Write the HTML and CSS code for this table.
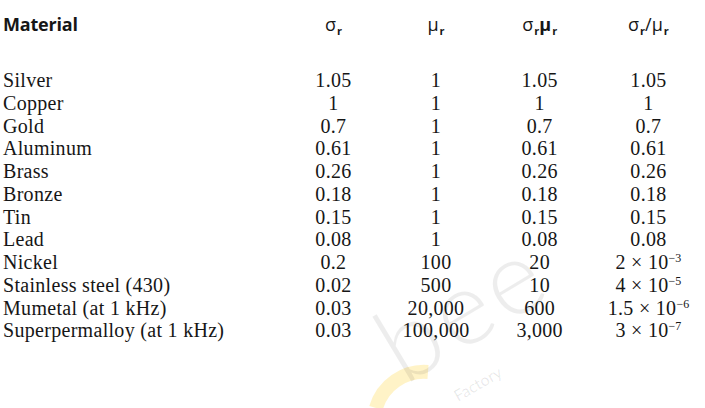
FILE: index.html
```html
<!DOCTYPE html>
<html lang="en">
<head>
    <meta charset="UTF-8">
    <title>Shielding materials</title>
    <link rel="stylesheet" href="styles.css">
</head>
<body>
    <table class="materials">
        <thead>
            <tr>
                <th class="name">Material</th>
                <th>&sigma;<sub>r</sub></th>
                <th>&mu;<sub>r</sub></th>
                <th>&sigma;<sub>r</sub><b>&mu;</b><sub>r</sub></th>
                <th>&sigma;<sub>r</sub>/&mu;<sub>r</sub></th>
            </tr>
        </thead>
        <tbody>
            <tr><td class="name">Silver</td><td>1.05</td><td>1</td><td>1.05</td><td>1.05</td></tr>
            <tr><td class="name">Copper</td><td>1</td><td>1</td><td>1</td><td>1</td></tr>
            <tr><td class="name">Gold</td><td>0.7</td><td>1</td><td>0.7</td><td>0.7</td></tr>
            <tr><td class="name">Aluminum</td><td>0.61</td><td>1</td><td>0.61</td><td>0.61</td></tr>
            <tr><td class="name">Brass</td><td>0.26</td><td>1</td><td>0.26</td><td>0.26</td></tr>
            <tr><td class="name">Bronze</td><td>0.18</td><td>1</td><td>0.18</td><td>0.18</td></tr>
            <tr><td class="name">Tin</td><td>0.15</td><td>1</td><td>0.15</td><td>0.15</td></tr>
            <tr><td class="name">Lead</td><td>0.08</td><td>1</td><td>0.08</td><td>0.08</td></tr>
            <tr><td class="name">Nickel</td><td>0.2</td><td>100</td><td>20</td><td>2 &times; 10<sup>&minus;3</sup></td></tr>
            <tr><td class="name">Stainless steel (430)</td><td>0.02</td><td>500</td><td>10</td><td>4 &times; 10<sup>&minus;5</sup></td></tr>
            <tr><td class="name">Mumetal (at 1 kHz)</td><td>0.03</td><td>20,000</td><td>600</td><td>1.5 &times; 10<sup>&minus;6</sup></td></tr>
            <tr><td class="name">Superpermalloy (at 1 kHz)</td><td>0.03</td><td>100,000</td><td>3,000</td><td>3 &times; 10<sup>&minus;7</sup></td></tr>
        </tbody>
    </table>

    <svg class="watermark" width="705" height="408" viewBox="0 0 705 408" aria-hidden="true">
        <path class="wm-c" d="M 376 408 A 50 50 0 0 1 428 372"/>
        <text class="wm-bee" x="404" y="386" transform="rotate(-31 404 386)">bee</text>
        <text class="wm-factory" x="458" y="402" transform="rotate(-30 458 402)">Factory</text>
    </svg>
</body>
</html>
```

FILE: styles.css
```css
body {
    margin: 0;
    background-color: #ffffff;
    color: #161616;
    font-family: "Liberation Serif", "Times New Roman", serif;
    font-size: 20px;
    position: relative;
    height: 408px;
    overflow: hidden;
}

.materials {
    border-collapse: collapse;
    margin: 12px 0 0 3px;
    position: relative;
    z-index: 1;
}

.materials th,
.materials td {
    padding: 0;
    text-align: center;
    white-space: nowrap;
}

.materials th {
    font-family: "Open Sans", "DejaVu Sans", sans-serif;
    font-weight: normal;
    font-size: 18px;
    line-height: 24px;
    height: 24px;
    padding-bottom: 33px;
}

.materials th.name {
    font-weight: bold;
    letter-spacing: -0.2px;
}

.materials th b {
    font-weight: bold;
}

.materials td {
    height: 22.75px;
    line-height: 22.75px;
    letter-spacing: 0.3px;
}

.materials .name {
    text-align: left;
    width: 281px;
}

.materials th:nth-child(2), .materials td:nth-child(2) { width: 104px; }
.materials th:nth-child(3), .materials td:nth-child(3) { width: 104px; }
.materials th:nth-child(4), .materials td:nth-child(4) { width: 106px; }
.materials th:nth-child(5), .materials td:nth-child(5) { width: 114px; }

sub {
    font-size: 11px;
    font-weight: bold;
    vertical-align: -4px;
    line-height: 0;
    margin-left: 1px;
}

sup {
    font-size: 12px;
    vertical-align: 7px;
    line-height: 0;
    letter-spacing: 0;
}

/* faint site watermark over the lower middle */
.watermark {
    position: absolute;
    left: 0;
    top: 0;
    pointer-events: none;
}

.wm-c {
    fill: none;
    stroke: rgba(255, 200, 0, 0.22);
    stroke-width: 14;
}

.wm-bee {
    font-family: Lato, "DejaVu Sans", sans-serif;
    font-weight: 300;
    font-size: 104px;
    letter-spacing: 4px;
    fill: rgba(0, 0, 0, 0.07);
}

.wm-factory {
    font-family: Lato, "DejaVu Sans", sans-serif;
    font-size: 16px;
    fill: rgba(0, 0, 0, 0.09);
}
```
